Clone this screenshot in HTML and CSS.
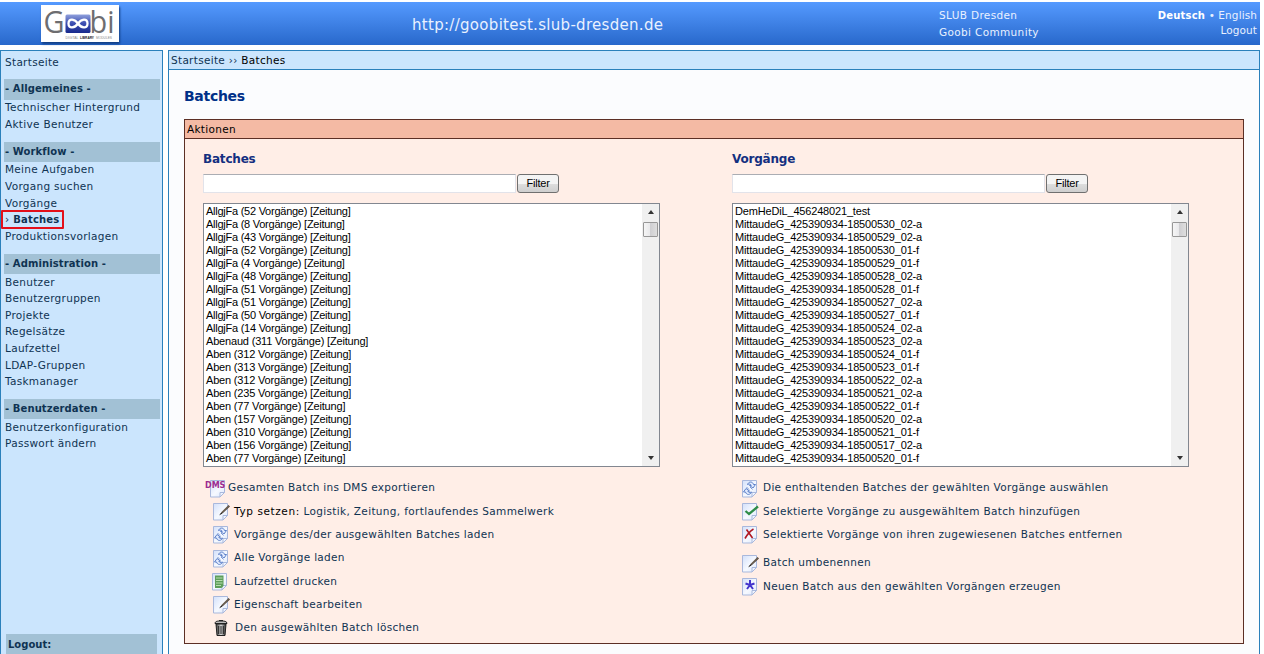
FILE: index.html
```html
<!DOCTYPE html>
<html lang="de">
<head>
<meta charset="utf-8">
<title>Goobi - Batches</title>
<link rel="stylesheet" href="styles.css">
</head>
<body>
<svg class="defs" width="0" height="0">
  <defs>
    <linearGradient id="paper" x1="0" y1="0" x2="1" y2="1"><stop offset="0" stop-color="#d3e0fa"/><stop offset=".55" stop-color="#f6f9ff"/><stop offset="1" stop-color="#dbe6fc"/></linearGradient>
    <linearGradient id="box" x1="0" y1="0" x2="0" y2="1"><stop offset="0" stop-color="#8fa0dc"/><stop offset=".5" stop-color="#3a4cb0"/><stop offset="1" stop-color="#182a8c"/></linearGradient>
    <linearGradient id="can" x1="0" y1="0" x2="1" y2="0"><stop offset="0" stop-color="#333"/><stop offset=".5" stop-color="#ddd"/><stop offset="1" stop-color="#222"/></linearGradient>
    <symbol id="sheet" viewBox="0 0 18 18"><path d="M.5.5h14v12l-4.500 4.500h-9.500z" fill="url(#paper)" stroke="#a9b8dc"/><path d="M14.500 12.500h-4.500v4.500z" fill="#eff4ff" stroke="#a9b8dc"/></symbol>
    <symbol id="pen" viewBox="0 0 18 18"><use href="#sheet" width="18" height="18"/><path d="M7 11.500 9 8.500 15.500 2 17 3.500 10 10z" fill="#53483f"/><path d="M9.500 9 15.500 3" stroke="#94846f" stroke-width=".7"/><path d="M6 12.500 8.300 9.500 9.300 10.500z" fill="#222"/></symbol>
    <symbol id="load" viewBox="0 0 18 18"><use href="#sheet" width="18" height="18"/><path d="M5.500 4.500C6.500 1.500 10.500 1 11.500 4.500h2L11 8 7.500 5.500h1.700C8.700 4 7.500 3.700 5.500 4.500z" fill="#e3ecff" stroke="#5b7fc8"/><path d="M9.500 12C8.500 15 4.500 15.500 3.500 12h-2L4 8.500 7.500 11H5.800C6.300 12.500 7.500 12.800 9.500 12z" fill="#e3ecff" stroke="#5b7fc8"/><path d="M4.500 7 7 9.500M8 7l2.500 2.500" stroke="#7d9ad6"/></symbol>
    <symbol id="slip" viewBox="0 0 18 18"><use href="#sheet" width="18" height="18"/><path d="M3 2.500h8.500v10.500l-2 2H3z" fill="#5e9e5b"/><path d="M4 5h6.500M4 7.500h6.500M4 10h6.500M4 12.500h5" stroke="#b8deb0"/></symbol>
    <symbol id="trash" viewBox="0 0 18 18"><path d="M4 5h10l-1 11.500H5z" fill="url(#can)" stroke="#222"/><path d="M6.700 7v8M9 7v8M11.300 7v8" stroke="#222"/><path d="M3 4.500C3 2 6 2 9 2s6 0 6 2.500z" fill="#bbb" stroke="#222"/><path d="M7 1.500h4" stroke="#222"/></symbol>
    <symbol id="check" viewBox="0 0 18 18"><use href="#sheet" width="18" height="18"/><path d="M3.500 8 7 11 16 3.500" fill="none" stroke="#2e8c48" stroke-width="2.300"/></symbol>
    <symbol id="cross" viewBox="0 0 18 18"><use href="#sheet" width="18" height="18"/><path d="M4.500 3.500 10.500 12M11.500 3C8 5 5 9 3 12.500" fill="none" stroke="#b01822" stroke-width="1.600"/></symbol>
    <symbol id="star" viewBox="0 0 18 18"><use href="#sheet" width="18" height="18"/><path d="M8 2v5M8 7l4.500-1.500M8 7l3 4M8 7l-3 4M8 7 3.500 5.500" fill="none" stroke="#4434cc" stroke-width="2"/></symbol>
  </defs>
</svg>
<header class="top">
  <svg class="logo" width="78" height="37" viewBox="0 0 78 37">
    <rect width="78" height="37" fill="#fff"/>
    <rect x="24.500" y="9.500" width="25" height="18.500" rx="1.500" fill="url(#box)"/>
    <text class="logo-big" x="2.500" y="28" textLength="21" lengthAdjust="spacingAndGlyphs">G</text>
    <text class="logo-big" x="48.500" y="28" textLength="25" lengthAdjust="spacingAndGlyphs">bi</text>
    <path d="M37 18.500C34 14 27.500 12.500 27.500 18.500s6.500 4.500 9.500 0 9.500-6 9.500 0-6.500 4.500-9.500 0z" fill="none" stroke="#fff" stroke-width="2.300"/>
    <text class="logo-small" x="24.500" y="33.500" textLength="13" lengthAdjust="spacingAndGlyphs">DIGITAL</text>
    <text class="logo-small strong" x="39" y="33.500" textLength="14" lengthAdjust="spacingAndGlyphs">LIBRARY</text>
    <text class="logo-small" x="55" y="33.500" textLength="16" lengthAdjust="spacingAndGlyphs">MODULES</text>
  </svg>
  <div class="site">http://goobitest.slub-dresden.de</div>
  <div class="orgs"><a>SLUB Dresden</a><a>Goobi Community</a></div>
  <div class="lang"><span><b>Deutsch</b> • English</span><span>Logout</span></div>
</header>
<div class="columns">
  <nav class="side">
    <a class="home">Startseite</a>
    <section><h4>- Allgemeines -</h4><a>Technischer Hintergrund</a><a>Aktive Benutzer</a></section>
    <section><h4>- Workflow -</h4><a>Meine Aufgaben</a><a>Vorgang suchen</a><a>Vorgänge</a><a class="active">› <b>Batches</b></a><a>Produktionsvorlagen</a></section>
    <section><h4>- Administration -</h4><a>Benutzer</a><a>Benutzergruppen</a><a>Projekte</a><a>Regelsätze</a><a>Laufzettel</a><a>LDAP-Gruppen</a><a>Taskmanager</a></section>
    <section><h4>- Benutzerdaten -</h4><a>Benutzerkonfiguration</a><a>Passwort ändern</a></section>
    <div class="session"><b>Logout:</b></div>
  </nav>
  <main class="main">
    <div class="crumbs"><a>Startseite</a> ›› <span>Batches</span></div>
    <h1>Batches</h1>
    <div class="panel">
      <div class="panel-head">Aktionen</div>
      <div class="panel-body">
        <div class="col">
          <h2>Batches</h2>
          <div class="filter"><div class="field"></div><div class="btn">Filter</div></div>
          <div class="list batches">
            <div class="rows"><div>AllgjFa (52 Vorgänge) [Zeitung]</div><div>AllgjFa (8 Vorgänge) [Zeitung]</div><div>AllgjFa (43 Vorgänge) [Zeitung]</div><div>AllgjFa (52 Vorgänge) [Zeitung]</div><div>AllgjFa (4 Vorgänge) [Zeitung]</div><div>AllgjFa (48 Vorgänge) [Zeitung]</div><div>AllgjFa (51 Vorgänge) [Zeitung]</div><div>AllgjFa (51 Vorgänge) [Zeitung]</div><div>AllgjFa (50 Vorgänge) [Zeitung]</div><div>AllgjFa (14 Vorgänge) [Zeitung]</div><div>Abenaud (311 Vorgänge) [Zeitung]</div><div>Aben (312 Vorgänge) [Zeitung]</div><div>Aben (313 Vorgänge) [Zeitung]</div><div>Aben (312 Vorgänge) [Zeitung]</div><div>Aben (235 Vorgänge) [Zeitung]</div><div>Aben (77 Vorgänge) [Zeitung]</div><div>Aben (157 Vorgänge) [Zeitung]</div><div>Aben (310 Vorgänge) [Zeitung]</div><div>Aben (156 Vorgänge) [Zeitung]</div><div>Aben (77 Vorgänge) [Zeitung]</div></div>
            <div class="bar"><i class="up"></i><i class="thumb"></i><i class="down"></i></div>
          </div>
          <ul class="acts">
            <li class="dms"><span class="dms-icon"><svg width="18" height="18"><use href="#sheet"/></svg><b>DMS</b></span>Gesamten Batch ins DMS exportieren</li>
            <li><svg width="18" height="18"><use href="#pen"/></svg><span class="kinds"><em>Typ setzen:</em> Logistik, Zeitung, fortlaufendes Sammelwerk</span></li>
            <li><svg width="18" height="18"><use href="#load"/></svg>Vorgänge des/der ausgewählten Batches laden</li>
            <li><svg width="18" height="18"><use href="#load"/></svg>Alle Vorgänge laden</li>
            <li class="slip"><svg width="18" height="18"><use href="#slip"/></svg>Laufzettel drucken</li>
            <li><svg width="18" height="18"><use href="#pen"/></svg>Eigenschaft bearbeiten</li>
            <li class="trash"><svg width="18" height="18"><use href="#trash"/></svg>Den ausgewählten Batch löschen</li>
          </ul>
        </div>
        <div class="col">
          <h2>Vorgänge</h2>
          <div class="filter"><div class="field"></div><div class="btn">Filter</div></div>
          <div class="list procs">
            <div class="rows"><div>DemHeDiL_456248021_test</div><div>MittaudeG_425390934-18500530_02-a</div><div>MittaudeG_425390934-18500529_02-a</div><div>MittaudeG_425390934-18500530_01-f</div><div>MittaudeG_425390934-18500529_01-f</div><div>MittaudeG_425390934-18500528_02-a</div><div>MittaudeG_425390934-18500528_01-f</div><div>MittaudeG_425390934-18500527_02-a</div><div>MittaudeG_425390934-18500527_01-f</div><div>MittaudeG_425390934-18500524_02-a</div><div>MittaudeG_425390934-18500523_02-a</div><div>MittaudeG_425390934-18500524_01-f</div><div>MittaudeG_425390934-18500523_01-f</div><div>MittaudeG_425390934-18500522_02-a</div><div>MittaudeG_425390934-18500521_02-a</div><div>MittaudeG_425390934-18500522_01-f</div><div>MittaudeG_425390934-18500520_02-a</div><div>MittaudeG_425390934-18500521_01-f</div><div>MittaudeG_425390934-18500517_02-a</div><div>MittaudeG_425390934-18500520_01-f</div></div>
            <div class="bar"><i class="up"></i><i class="thumb"></i><i class="down"></i></div>
          </div>
          <ul class="acts">
            <li><svg width="18" height="18"><use href="#load"/></svg>Die enthaltenden Batches der gewählten Vorgänge auswählen</li>
            <li><svg width="18" height="18"><use href="#check"/></svg>Selektierte Vorgänge zu ausgewähltem Batch hinzufügen</li>
            <li><svg width="18" height="18"><use href="#cross"/></svg>Selektierte Vorgänge von ihren zugewiesenen Batches entfernen</li>
            <li class="gap"><svg width="18" height="18"><use href="#pen"/></svg>Batch umbenennen</li>
            <li><svg width="18" height="18"><use href="#star"/></svg>Neuen Batch aus den gewählten Vorgängen erzeugen</li>
          </ul>
        </div>
      </div>
    </div>
  </main>
</div>
</body>
</html>
```
FILE: styles.css
```css
*, *::after { box-sizing: border-box; }
html, body { height: 654px; margin: 0; overflow: hidden; }
body { display: flex; flex-direction: column; padding-top: 2px; background: #fff; color: #0f3352; font: 10.500px/16.600px "DejaVu Sans", sans-serif; letter-spacing: .3px; white-space: nowrap; }
.defs { position: absolute; }
.top { width: 1260px; height: 43px; flex: none; display: grid; grid-template-columns: 412px 527px 140px 1fr; background: linear-gradient(#559aff, #2868cb); color: #e9f1ff; }
.logo { margin: 3px 0 0 41px; box-shadow: 1px 2px 2px #123f85; overflow: visible; }
.logo-big { font: 31px "Open Sans", sans-serif; fill: #6d6d70; letter-spacing: 0; }
.logo-small { font: 4px "Liberation Sans", sans-serif; fill: #888; letter-spacing: 0; }
.strong { font-weight: bold; fill: #222; }
.site { font-size: 15px; line-height: 46px; letter-spacing: .3px; }
.orgs { display: flex; flex-direction: column; padding-top: 5px; line-height: 17px; letter-spacing: .35px; }
.lang { display: flex; flex-direction: column; padding: 6px 3px 0 0; line-height: 15px; text-align: right; letter-spacing: .1px; }
b { font-size: 10px; line-height: 1; letter-spacing: .2px; }
.lang b { color: #fff; }
.columns { flex: 1; margin-top: 5px; width: 1260px; display: flex; gap: 5px; }
.side { width: 163px; border: 1px solid #2a80bb; border-bottom: 0; background: #cbe5fd; padding: 2.500px 2px 0 3px; display: flex; flex-direction: column; }
.side a { height: 16.600px; padding-left: 1px; display: block; position: relative; }
.side .home { height: 17.100px; margin-bottom: 8.800px; }
.side section { margin-bottom: 8.800px; }
.side section a { top: -.5px; }
.side h4 { margin: 0; height: 20.300px; line-height: 20.300px; font-size: 10px; letter-spacing: .1px; background: #a2c1d5; padding-left: 1px; }
.side .active::after { content: ""; position: absolute; left: -3px; top: -1px; width: 63px; height: 19px; border: 2px solid #e3101a; border-radius: 1px; }
.session { margin: auto 3px 0 2px; height: 20px; padding: 2px; background: #a2c1d5; }
.session b { letter-spacing: 0; }
.main { flex: 1; border: 1px solid #2a80bb; border-bottom: 0; background: #fbfcfe; }
.crumbs { height: 19px; line-height: 19px; padding-left: 2px; background: #cbe5fd; border-bottom: 1px solid #2a80bb; }
.crumbs span, em { color: #000; font-style: normal; }
em { letter-spacing: .6px; }
.kinds { letter-spacing: .34px; }
h1 { margin: 17px 0 13px 15px; color: #003088; font-size: 14px; line-height: 19px; letter-spacing: -.3px; }
.panel { margin-left: 15px; width: 1060px; height: 525px; border: 1px solid #5c2f25; background: #ffeee7; }
.panel-head { height: 19px; line-height: 19px; padding-left: 2px; background: #f4baa4; border-bottom: 1px solid #5c2f25; color: #000; }
.panel-body { display: flex; gap: 72px; padding: 11px 0 0 18px; }
.col { width: 457px; }
h2 { margin: 0; font-size: 12px; line-height: 19px; letter-spacing: -.2px; color: #132f80; }
.filter { display: flex; gap: 1px; margin-top: 5px; }
.field { width: 313px; height: 19px; background: #fff; border: 1px solid #e2e3ea; border-top-color: #abadb3; }
.btn { width: 42px; height: 19px; border: 1px solid #707070; border-radius: 3px; background: linear-gradient(#f4f4f4 50%, #dedede 50%, #cfcfcf); color: #000; font: 11px/17px "Liberation Sans", sans-serif; letter-spacing: -.2px; text-align: center; }
.list { margin-top: 10px; height: 264px; border: 1px solid #828790; background: #fff; display: flex; justify-content: space-between; color: #000; font: 11px/13px "Liberation Sans", sans-serif; letter-spacing: -.25px; }
.rows { padding: 1px 0 0 2px; }
.batches .rows div:nth-child(n+11) { letter-spacing: -.18px; }
.procs { letter-spacing: -.17px; }
.bar { width: 17px; background: #f0f0f0; display: flex; flex-direction: column; align-items: center; }
.up { margin-top: 6px; border: 3.500px solid transparent; border-top: 0; border-bottom: 4px solid #333; }
.thumb { margin: 8px 1px 0 0; width: 15px; height: 15px; border: 1px solid #979797; border-radius: 1px; background: linear-gradient(90deg, #f5f5f5, #e9e9eb 45%, #cfcfd2 50%, #dedede); }
.down { margin: auto 0 6px; border: 3.500px solid transparent; border-bottom: 0; border-top: 4px solid #333; }
.acts { list-style: none; margin: 9px 0 0 10px; padding: 0; }
.acts li { display: flex; align-items: center; height: 23.300px; gap: 3px; }
.acts svg { flex: none; position: relative; top: 1px; }
.acts li.dms { margin-left: -8px; gap: 0; }
.dms-icon { position: relative; width: 23px; height: 18px; padding-left: 5px; }
.dms-icon b { position: absolute; left: 0; top: 1px; font-size: 8px; line-height: 12px; letter-spacing: 0; color: #9c2c90; }
.acts li.slip { margin-left: -1px; gap: 4px; }
.acts li.trash { margin-left: -1px; gap: 5px; }
.acts li.gap { margin-top: 5px; }
```
